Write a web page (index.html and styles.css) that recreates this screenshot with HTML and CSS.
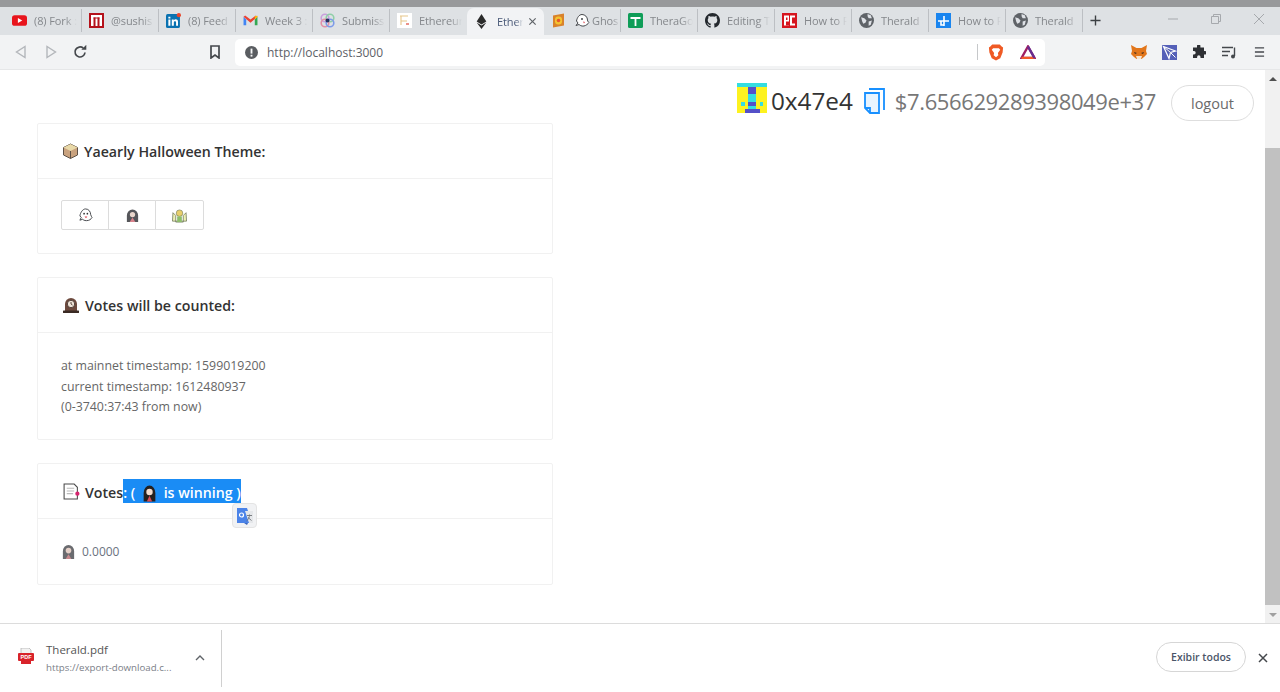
FILE: index.html
```html
<!DOCTYPE html>
<html lang="en">
<head>
<meta charset="utf-8">
<title>Ethereum App</title>
<link rel="stylesheet" href="styles.css">
</head>
<body>
<div class="window">
  <div class="titlebar"></div>
  <div class="tabstrip">
    <div class="tab"><svg class="fav" viewBox="0 0 14 14"><rect y="2" width="14" height="10" rx="2.5" fill="#e8141c"/><path d="M5.5 4.6v4.8L9.6 7z" fill="#fff"/></svg><span class="tab-title">(8) Fork :</span></div>
    <div class="tab"><svg class="fav" viewBox="0 0 15 15"><rect width="15" height="15" fill="#b5121b"/><rect x="2" y="2" width="11" height="11" fill="#fff"/><rect x="4.500" y="4.500" width="2" height="8.500" fill="#b5121b"/><rect x="8.500" y="4.500" width="2" height="8.500" fill="#b5121b"/><rect x="4.500" y="4.500" width="6" height="1" fill="#b5121b"/></svg><span class="tab-title">@sushis</span></div>
    <div class="tab"><svg class="fav" viewBox="0 0 14 14"><rect y="1" width="13" height="13" rx="1.5" fill="#0a72b1"/><circle cx="12" cy="2" r="2" fill="#e8452c"/><path d="M2.2 6h1.9v6H2.2zM2.2 3.4h1.9v1.7H2.2zM5.4 6h1.8v.9c.9-1.4 4-1.5 4 1.300V12H9.400V8.800c0-1.400-2.100-1.300-2.100 0V12H5.400z" fill="#fff"/></svg><span class="tab-title">(8) Feed</span></div>
    <div class="tab"><svg class="fav" viewBox="0 0 14 14"><path d="M.5 3.500v8h2.500V6z" fill="#4285f4"/><path d="M11 6v5.500h2.500v-8z" fill="#34a853"/><path d="M.5 3.500 2 2.400 7 6l5-3.600 1.500 1.100L7 9z" fill="#ea4335"/><path d="M11 3.100 13.500 2.500v1L11 6z" fill="#fbbc04"/></svg><span class="tab-title">Week 3 :</span></div>
    <div class="tab"><svg class="fav" viewBox="0 0 15 15"><circle cx="5" cy="5" r="3.800" fill="none" stroke="#c9a0dc" stroke-width="1.600"/><circle cx="10" cy="5" r="3.800" fill="none" stroke="#8fcfa8" stroke-width="1.600"/><circle cx="5" cy="10" r="3.800" fill="none" stroke="#e28fa5" stroke-width="1.600"/><circle cx="10" cy="10" r="3.800" fill="none" stroke="#7d9be8" stroke-width="1.600"/><circle cx="7.500" cy="7.500" r="2" fill="#27305e"/></svg><span class="tab-title">Submiss</span></div>
    <div class="tab"><svg class="fav" viewBox="0 0 15 15"><rect width="15" height="15" fill="#fff"/><path d="M3 3h8M4 3v9M4 8h6" stroke="#e5c58a" stroke-width="1.100" fill="none"/><path d="M9 11h3" stroke="#e0564a" stroke-width="1.300"/></svg><span class="tab-title">Ethereur</span></div>
    <div class="tab tab-active"><svg class="fav" viewBox="0 0 14 14"><path d="M7 0 2.500 7 7 9.700 11.500 7z" fill="#2b2b2b"/><path d="M2.500 8 7 14l4.500-6L7 10.700z" fill="#2b2b2b"/></svg><span class="tab-title tab-title-short">Ether</span><svg class="tab-close" viewBox="0 0 10 10"><path d="M1.500 1.500l7 7M8.500 1.500l-7 7" stroke="#5f6368" stroke-width="1.300"/></svg></div>
    <div class="tab tab-compact"><svg class="fav fav-narrow" viewBox="0 0 14 14"><path d="M1 2 12 0v12L1 14z" fill="#d9822b"/><rect x="3" y="3" width="7" height="8" rx="3" fill="#f4c430"/><circle cx="6.500" cy="7" r="1.800" fill="#e8552c"/></svg><svg class="fav fav-ghost" viewBox="0 0 15 15"><path d="M7 1.500c3 0 5.500 2.500 5.500 5.500 0 1.500 1 2 1.500 2.500-1 1.500-3 3-5 3.500-3 .5-4-1-5-1.500L1 12.500 3 10 1.500 8C2 5 4 1.500 7 1.500z" fill="#fff" stroke="#45484c" stroke-width="1"/><circle cx="7" cy="6" r="1" fill="#45484c"/><path d="M8 8.500l2 .5-1 1.500z" fill="#d9414b"/></svg><span class="tab-title tab-title-ghost">Ghos</span></div>
    <div class="tab"><svg class="fav" viewBox="0 0 15 15"><rect width="15" height="15" rx="1.500" fill="#0f9d58"/><path d="M2.500 5h10M7.500 5v8" stroke="#fff" stroke-width="1.800"/></svg><span class="tab-title">TheraGo</span></div>
    <div class="tab"><svg class="fav" viewBox="0 0 16 16"><path fill="#24292e" d="M8 0C3.580 0 0 3.580 0 8c0 3.540 2.290 6.530 5.470 7.590.4.070.55-.17.550-.38 0-.19-.010-.82-.010-1.490-2.010.37-2.530-.49-2.690-.94-.090-.23-.48-.94-.82-1.130-.28-.15-.68-.52-.010-.53.63-.010 1.080.58 1.230.82.720 1.210 1.870.87 2.330.66.070-.52.280-.87.510-1.070-1.780-.2-3.640-.89-3.640-3.950 0-.87.310-1.590.820-2.150-.080-.2-.36-1.020.080-2.120 0 0 .67-.21 2.200.820.640-.18 1.320-.27 2-.27s1.360.090 2 .27c1.530-1.040 2.200-.82 2.200-.82.440 1.100.160 1.920.080 2.120.510.560.820 1.270.820 2.150 0 3.070-1.870 3.750-3.650 3.950.290.250.540.730.540 1.480 0 1.070-.010 1.930-.010 2.200 0 .210.150.460.550.380A8.010 8.010 0 0 0 16 8c0-4.420-3.580-8-8-8z"/></svg><span class="tab-title">Editing T</span></div>
    <div class="tab"><svg class="fav" viewBox="0 0 15 15"><rect width="15" height="15" fill="#d6161f"/><rect x="2" y="2.500" width="5" height="10" fill="#fff"/><rect x="8" y="2.500" width="5" height="10" fill="#fff"/><rect x="4" y="4.500" width="1.500" height="2.500" fill="#d6161f"/><rect x="4" y="8.500" width="3" height="4" fill="#d6161f"/><rect x="10" y="4.500" width="3" height="6" fill="#d6161f"/></svg><span class="tab-title">How to F</span></div>
    <div class="tab"><svg class="fav" viewBox="0 0 14 14"><circle cx="7" cy="7" r="7" fill="#5f6368"/><path d="M2 4l3 1 2 2-1 2-2 1-1-2zM8 1l3 1 1 3-3 0-1-2zM9 8l3-1-1 4-2 1z" fill="#dee1e6"/></svg><span class="tab-title">Therald</span></div>
    <div class="tab"><svg class="fav" viewBox="0 0 15 15"><rect width="15" height="15" fill="#1a85ef"/><path d="M2 8h11M8 3v10M5 8v4h3" stroke="#fff" stroke-width="1.600" fill="none"/></svg><span class="tab-title">How to F</span></div>
    <div class="tab"><svg class="fav" viewBox="0 0 14 14"><circle cx="7" cy="7" r="7" fill="#5f6368"/><path d="M2 4l3 1 2 2-1 2-2 1-1-2zM8 1l3 1 1 3-3 0-1-2zM9 8l3-1-1 4-2 1z" fill="#dee1e6"/></svg><span class="tab-title">Therald</span></div>
    <div class="tab-new"><svg viewBox="0 0 12 12"><path d="M6 .5v11M.5 6h11" stroke="#3c4043" stroke-width="1.500"/></svg></div>
    <div class="window-controls">
      <svg viewBox="0 0 12 12"><path d="M1 6h10" stroke="#a6a9ad" stroke-width="1"/></svg>
      <svg viewBox="0 0 12 12"><path d="M1.500 3.500h7v7h-7zM3.500 3.500v-2h7v7h-2" stroke="#a6a9ad" stroke-width="1" fill="none"/></svg>
      <svg viewBox="0 0 12 12"><path d="M1 1l10 10M11 1 1 11" stroke="#a6a9ad" stroke-width="1"/></svg>
    </div>
  </div>
  <div class="toolbar">
    <svg class="nav nav-back" viewBox="0 0 12 14"><path d="M10 1.500v11L1.500 7z" fill="none" stroke="#b4b7bb" stroke-width="1.400"/></svg>
    <svg class="nav nav-forward" viewBox="0 0 12 14"><path d="M2 1.500v11L10.500 7z" fill="none" stroke="#b4b7bb" stroke-width="1.400"/></svg>
    <svg class="nav nav-reload" viewBox="0 0 14 14"><path d="M12 7.500A5 5 0 1 1 10.300 3.200" fill="none" stroke="#45484c" stroke-width="1.700"/><path d="M8.300 4.800h5v-5z" fill="#45484c"/></svg>
    <svg class="nav nav-bookmark" viewBox="0 0 12 14"><path d="M2 1h8v12L6 10l-4 3z" fill="none" stroke="#45484c" stroke-width="1.700"/></svg>
    <div class="omnibox">
      <svg class="omni-info" viewBox="0 0 14 14"><circle cx="7" cy="7" r="7" fill="#5a5d61"/><rect x="6" y="2.800" width="2" height="5.400" fill="#f6f7f8"/><rect x="6" y="9.400" width="2" height="2" fill="#f6f7f8"/></svg>
      <span class="omni-url">http://localhost:3000</span>
      <span class="omni-divider"></span>
      <svg class="omni-brave" viewBox="0 0 16 18"><path d="M4 .5h8l2 2.200 1.500 1-.5 5.300-2.500 6L8 17.500 3.500 15 1 9 .5 3.700l1.500-1z" fill="#ef5a24"/><path d="M5 4.500h6l1.500 1.500L10 9.500l.5 2.500L8 14l-2.500-2L6 9.500 3.500 6z" fill="#fff"/></svg>
      <svg class="omni-bat" viewBox="0 0 16 14"><path d="M8 1.500 14.500 13h-13z" fill="none" stroke="#9e1f63" stroke-width="2.400"/><path d="M1.500 13h13" stroke="#f15a29" stroke-width="2.400"/><path d="M8 1.500 14.500 13" stroke="#662d91" stroke-width="2.400"/></svg>
    </div>
    <svg class="ext ext-fox" viewBox="0 0 16 14"><path d="M0 0l5.500 3h5L16 0l-1 6 1 3-3 3-2.500 2h-5L3 12 0 9l1-3z" fill="#e2761b"/><path d="M5 11h6l-1 3H6z" fill="#f5e6d3"/><path d="M3 7l3 1-2 1zM13 7l-3 1 2 1z" fill="#3b2a1e"/></svg>
    <svg class="ext ext-square" viewBox="0 0 15 15"><rect width="15" height="15" fill="#5560b8"/><path d="M1.500 1.500 13.500 6 8.500 7.500 7 13.500z" fill="none" stroke="#fff" stroke-width="1.200"/><path d="M1.500 1.500 8.500 7.500l5 5" stroke="#fff" stroke-width="1"/></svg>
    <svg class="ext ext-puzzle" viewBox="0 0 14 14"><path d="M5 1a1.700 1.700 0 0 1 3.400 0V2.500H12V6h1a1.700 1.700 0 0 1 0 3.400h-1V13H8.500v-1a1.700 1.700 0 0 0-3.400 0v1H1V9.400h1A1.700 1.700 0 0 0 2 6H1V2.500h4z" fill="#2e3034"/></svg>
    <svg class="ext ext-media" viewBox="0 0 15 13"><path d="M0 1.500h11M0 5.500h8M0 9.500h6" stroke="#45484c" stroke-width="1.400"/><path d="M12.500 1.500V10" stroke="#45484c" stroke-width="1.400"/><circle cx="11" cy="10.500" r="2" fill="#45484c"/></svg>
    <svg class="ext ext-menu" viewBox="0 0 12 12"><path d="M1 1.500h10M1 6h10M1 10.500h10" stroke="#45484c" stroke-width="1.500"/></svg>
  </div>
  <div class="viewport">
    <main class="page">
      <header class="account">
        <svg class="identicon" viewBox="0 0 8 8" shape-rendering="crispEdges">
          <rect width="8" height="8" fill="#35dde0"/>
          <rect x="0" y="1" width="3" height="7" fill="#fdf21f"/><rect x="5" y="1" width="3" height="7" fill="#fdf21f"/>
          <rect x="3" y="1" width="2" height="2" fill="#5450c8"/>
          <rect x="3" y="5" width="2" height="1" fill="#5450c8"/>
          <rect x="1" y="5" width="1" height="1" fill="#35dde0"/><rect x="6" y="5" width="1" height="1" fill="#35dde0"/>
          <rect x="3" y="7" width="2" height="1" fill="#5450c8"/>
          <rect x="2" y="7" width="1" height="1" fill="#5450c8"/><rect x="5" y="7" width="1" height="1" fill="#5450c8"/>
        </svg>
        <span class="address">0x47e4</span>
        <svg class="copy" viewBox="0 0 22 26"><path d="M6 1h15v21" fill="none" stroke="#1890ff" stroke-width="1.800"/><path d="M2 5h14v20H7l-5-5z" fill="#e8f4ff" stroke="#1890ff" stroke-width="1.800"/><path d="M2 20h5v5" fill="none" stroke="#1890ff" stroke-width="1.800"/></svg>
        <span class="balance">$7.656629289398049e+37</span>
        <button class="logout">logout</button>
      </header>
      <section class="card card-theme">
        <h2 class="card-head">
          <svg class="emoji" viewBox="0 0 16 16"><path d="M8 1 15 4.500v7.500L8 15.500 1 12V4.500z" fill="#c9a27e" stroke="#5d5147" stroke-width="1"/><path d="M8 1 15 4.500 8 8 1 4.500z" fill="#e9d9a8"/><path d="M8 8v7.500" stroke="#5d5147" stroke-width="1"/></svg>
          Yaearly Halloween Theme:
        </h2>
        <div class="card-body card-choices">
          <div class="choices">
            <button class="choice"><svg class="emoji-sm" viewBox="0 0 16 16"><path d="M8 1c3.500 0 5.500 3 5.500 6 0 1.500 1.500 2.500 1.500 3-1 2-3 3.500-6 3.500-2.500 0-3.500-1-4-1.500L2 13 3.500 10 2 8.500C2.500 5 5 1 8 1z" fill="#fff" stroke="#3f4145" stroke-width="1"/><circle cx="6.500" cy="6" r=".9" fill="#333"/><circle cx="10" cy="6" r=".9" fill="#333"/><path d="M7 9h3l-1.500 2z" fill="#e0434f"/></svg></button>
            <button class="choice"><svg class="emoji-sm" viewBox="0 0 16 16"><path d="M2 15V8a6 6.500 0 0 1 12 0v7z" fill="#55565a"/><circle cx="8" cy="7" r="2.800" fill="#e9d6cc"/><path d="M5 15l3-5 3 5z" fill="#d9838c"/></svg></button>
            <button class="choice"><svg class="emoji-sm" viewBox="0 0 16 16"><path d="M1 5l3 3v7h8V8l3-3 .5 9H.5z" fill="#eef0b5" stroke="#6a7456" stroke-width=".8"/><circle cx="8" cy="5.500" r="3.500" fill="#e8cf6a" stroke="#6a7456" stroke-width=".6"/><path d="M5.500 9h5v6h-5z" fill="#8fbe6a"/></svg></button>
          </div>
        </div>
      </section>
      <section class="card card-count">
        <h2 class="card-head">
          <svg class="emoji emoji-wide" viewBox="0 0 18 16"><path d="M3 14V7a6 6 0 0 1 12 0v7z" fill="#6d4a3e"/><circle cx="9" cy="7" r="3.700" fill="#f0e4d8" stroke="#3a2a24" stroke-width=".8"/><path d="M9 5v2l1.500 1" stroke="#3a2a24" stroke-width=".8" fill="none"/><rect x="1" y="13.500" width="16" height="2.500" rx=".5" fill="#3a2a24"/></svg>
          Votes will be counted:
        </h2>
        <div class="card-body card-text">
          at mainnet timestamp: 1599019200<br>
          current timestamp: 1612480937<br>
          (0-3740:37:43 from now)
        </div>
      </section>
      <section class="card card-votes">
        <h2 class="card-head">
          <svg class="emoji emoji-doc" viewBox="0 0 16 16"><path d="M1.500 1H11l3 3v11H1.500z" fill="#fff" stroke="#4a4a4a" stroke-width="1"/><path d="M4 5h7M4 7.500h7M4 10h6" stroke="#b9b9b9" stroke-width="1"/><circle cx="14" cy="10" r="2" fill="#d6246e"/></svg>
          <span class="votes-label">Votes<span class="selected">: ( <svg class="emoji-inline" viewBox="0 0 16 16"><path d="M2.500 16V8a5.500 7 0 0 1 11 0v8z" fill="#24201f"/><circle cx="8" cy="7" r="3" fill="#f2dccf"/><path d="M5.500 16 8 10.500 10.500 16z" fill="#d94a56"/></svg> is winning )</span></span>
        </h2>
        <div class="translate-pop"><svg viewBox="0 0 18 18"><path d="M1 1h10l5 15H1z" fill="#4b83e8"/><path d="M9 4h8v12h-4z" fill="#e5e7ea"/><path d="M11 8.500h5M13.500 7.500c0 3-1 5-3 6.500M12 10.500l3.500 3" stroke="#6e7276" stroke-width=".9" fill="none"/><circle cx="5.500" cy="8" r="2" fill="none" stroke="#fff" stroke-width="1.200"/><path d="M8 16l3 2 1-2z" fill="#3a66bd"/></svg></div>
        <div class="card-body vote-row">
          <svg class="emoji-sm" viewBox="0 0 16 16"><path d="M2 16V8a6 7 0 0 1 12 0v8z" fill="#6a6b6f"/><circle cx="8" cy="7" r="3" fill="#e4cfc7"/><path d="M5 16l3-5 3 5z" fill="#c98a8e"/></svg>
          <span>0.0000</span>
        </div>
      </section>
    </main>
    <div class="scrollbar">
      <div class="scroll-btn"><span class="arrow-up"></span></div>
      <div class="scroll-track"><div class="scroll-thumb"></div></div>
      <div class="scroll-btn"><span class="arrow-down"></span></div>
    </div>
  </div>
  <footer class="downloads">
    <div class="download-item">
      <svg class="pdf" viewBox="0 0 16 16"><path d="M3 0h8l2 2v4H3z" fill="#f2f2f2" stroke="#b5b5b5" stroke-width=".8"/><rect y="5" width="16" height="8" rx="1" fill="#d8232a"/><rect x="3" y="13" width="10" height="3" fill="#d8232a"/><text x="8" y="11.300" class="pdf-text">PDF</text></svg>
      <div class="download-text">
        <span class="download-name">Therald.pdf</span>
        <span class="download-url">https://export-download.c...</span>
      </div>
      <svg class="chevron" viewBox="0 0 10 6"><path d="M1 5l4-4 4 4" fill="none" stroke="#5f6368" stroke-width="1.400"/></svg>
    </div>
    <div class="download-spacer"></div>
    <button class="show-all">Exibir todos</button>
    <svg class="download-close" viewBox="0 0 10 10"><path d="M1 1l8 8M9 1 1 9" stroke="#45484c" stroke-width="1.500"/></svg>
  </footer>
</div>
</body>
</html>
```
FILE: styles.css
```css
* { box-sizing: border-box; }
html, body { margin: 0; height: 100%; overflow: hidden; background: #fff; }
body { font-family: "Open Sans", "Noto Sans", "Liberation Sans", sans-serif; color: #555; }
button { font-family: inherit; }

.window { width: 1280px; height: 692px; display: flex; flex-direction: column; }
.titlebar { height: 7px; flex: none; background: #98999b; }

.tabstrip { height: 28px; flex: none; background: #dee1e4; display: flex; align-items: stretch; padding-left: 5px; }
.tab { width: 77px; flex: none; display: flex; align-items: center; padding: 0 4px 0 7px; border-right: 1px solid #bcbfc3; margin: 2px 0 3px; }
.tab:nth-child(6) { border-right-color: transparent; }
.tab-active { background: #f2f3f5; margin: 1px 0 0; border: 0; border-radius: 7px 7px 0 0; padding-right: 7px; }
.tab-compact { padding-right: 0; }
.fav { width: 15px; height: 15px; flex: none; }
.fav-narrow { width: 14px; margin-left: 1px; }
.fav-ghost { margin-left: 9px; }
.tab-title { margin-left: 7px; flex: 1; overflow: hidden; white-space: nowrap; font-size: 11px; line-height: 16px; color: #85888c; -webkit-mask-image: linear-gradient(to right, #000 72%, transparent); mask-image: linear-gradient(to right, #000 72%, transparent); letter-spacing: -.1px; }
.tab-title-ghost { margin-left: 2px; }
.tab-title-short { color: #4a5a78; margin-left: 8px; }
.tab-close { width: 9px; height: 9px; flex: none; margin-left: 5px; }
.tab-new { width: 22px; display: flex; align-items: center; justify-content: center; margin-left: 1px; padding-bottom: 2px; }
.tab-new svg { width: 11px; height: 11px; }
.window-controls { margin-left: auto; display: flex; align-items: center; gap: 31px; padding: 0 15px 4px 0; }
.window-controls svg { width: 12px; height: 12px; display: block; }

.toolbar { height: 35px; flex: none; background: #f2f3f4; display: flex; align-items: center; padding: 0 15px 0 15px; border-bottom: 1px solid #e6e7e8; }
.nav { flex: none; height: 14px; width: 12px; }
.nav-forward { margin-left: 18px; }
.nav-reload { margin-left: 16px; width: 14px; }
.nav-bookmark { margin-left: 122px; }
.omnibox { flex: none; width: 810px; height: 27px; background: #fff; border-radius: 5px; margin-left: 14px; display: flex; align-items: center; padding-left: 10px; }
.omni-info { width: 13px; height: 13px; flex: none; }
.omni-url { font-size: 12px; margin-left: 9px; color: #5d6167; }
.omni-divider { width: 1px; height: 16px; background: #c6c8ca; margin-left: auto; }
.omni-brave { width: 16px; height: 17px; flex: none; margin-left: 10px; }
.omni-bat { width: 16px; height: 14px; flex: none; margin: 0 9px 0 16px; }
.ext { flex: none; }
.ext-fox { width: 16px; height: 14px; margin-left: 86px; }
.ext-square { width: 15px; height: 15px; margin-left: 15px; }
.ext-puzzle { width: 14px; height: 14px; margin-left: 15px; }
.ext-media { width: 15px; height: 13px; margin-left: 16px; }
.ext-menu { width: 11px; height: 12px; margin-left: 17px; }

.viewport { flex: 1; min-height: 0; display: flex; position: relative; }
.page { flex: 1; min-width: 0; padding: 0 11px 0 37px; display: flex; flex-direction: column; }

.account { height: 53px; display: flex; align-items: center; padding-top: 12px; justify-content: flex-end; flex: none; }
.identicon { width: 30px; height: 30px; flex: none; margin-top: -10px; }
.address { font-size: 24.300px; line-height: 32px; color: #333; margin-left: 4px; margin-top: -3px; }
.copy { width: 22px; height: 26px; flex: none; margin-left: 10px; margin-top: -3px; }
.balance { font-size: 22px; line-height: 30px; color: #777; margin-left: 10px; letter-spacing: -.39px; margin-top: -3px; }
.logout { width: 83px; height: 36px; margin-left: 15px; border: 1px solid #dedede; border-radius: 18px; background: #fff; font-size: 14.500px; color: #6a6a6a; padding: 0; margin-top: 1px; }

.card { width: 516px; border: 1px solid #f1f1f1; border-radius: 2px; position: relative; flex: none; }
.card-theme { height: 131px; }
.card-count { height: 163px; margin-top: 23px; }
.card-votes { height: 122px; margin-top: 23px; }
.card-head { margin: 0; height: 55px; padding: 0 24px; display: flex; align-items: center; gap: 5px; font-size: 14.200px; font-weight: 600; color: #333; border-bottom: 1px solid #f1f1f1; white-space: nowrap; }
.emoji { width: 17px; height: 16px; flex: none; }
.emoji-wide { width: 18px; }
.emoji-doc { width: 18px; height: 17px; }
.emoji-inline { vertical-align: -4px; margin: 0 2px; width: 17px; height: 18px; }
.emoji-sm { width: 15px; height: 15px; flex: none; display: block; }
.card-body { padding: 22px 23px; font-size: 12px; }
.card-choices { padding-top: 21px; }
.choices { display: flex; }
.choice { width: 48px; height: 30px; background: #fff; border: 1px solid #dcdcdc; margin-right: -1px; padding: 0; display: flex; align-items: center; justify-content: center; border-radius: 0; }
.choice:first-child { border-radius: 2px 0 0 2px; }
.choice:last-child { border-radius: 0 2px 2px 0; margin-right: 0; width: 49px; }
.card-text { font-size: 12.350px; line-height: 20.500px; color: #666; padding-top: 23px; }
.vote-row { display: flex; align-items: center; gap: 6px; padding-top: 24px; color: #6b7280; }
.votes-label { height: 24px; line-height: 28px; }
.selected { background: #1a8cf5; color: #fff; display: inline-block; height: 24px; line-height: 28px; }
.translate-pop { position: absolute; left: 194px; top: 39px; width: 25px; height: 25px; background: #f1f2f4; border: 1px solid #e4e4e4; border-radius: 4px; display: flex; align-items: center; justify-content: center; z-index: 1; }
.translate-pop svg { width: 18px; height: 18px; }

.scrollbar { width: 15px; flex: none; background: #f1f1f1; display: flex; flex-direction: column; }
.scroll-btn { height: 17px; flex: none; display: flex; align-items: center; justify-content: center; }
.arrow-up { width: 0; height: 0; border: 4px solid transparent; border-top: 0; border-bottom: 4px solid #505050; }
.arrow-down { width: 0; height: 0; border: 4px solid transparent; border-bottom: 0; border-top: 4px solid #a0a0a0; }
.scroll-track { flex: 1; padding-top: 61px; padding-bottom: 1px; display: flex; }
.scroll-thumb { width: 100%; background: #c1c1c1; }

.downloads { height: 69px; flex: none; background: #fff; border-top: 1px solid #dcdcdc; display: flex; align-items: center; padding-right: 12px; }
.download-item { width: 222px; height: 57px; flex: none; display: flex; align-items: center; padding-left: 18px; border-right: 1px solid #d0d0d0; }
.pdf { width: 16px; height: 16px; flex: none; margin-top: -4px; }
.pdf-text { font-size: 5.500px; font-weight: 700; fill: #fff; text-anchor: middle; font-family: "Liberation Sans", sans-serif; }
.download-text { display: flex; flex-direction: column; margin-left: 12px; width: 149px; margin-top: 2px; }
.download-name { font-size: 11.500px; line-height: 17px; color: #555; }
.download-url { font-size: 9.700px; line-height: 19px; color: #7b8088; white-space: nowrap; }
.chevron { width: 10px; height: 6px; flex: none; }
.download-spacer { flex: 1; }
.show-all { width: 90px; height: 30px; border: 1px solid #d6d6d6; border-radius: 15px; background: #fff; font-size: 10.500px; font-weight: 600; color: #4a5568; padding: 0; margin-top: -2px; }
.download-close { width: 10px; height: 10px; flex: none; margin-left: 12px; }
```
